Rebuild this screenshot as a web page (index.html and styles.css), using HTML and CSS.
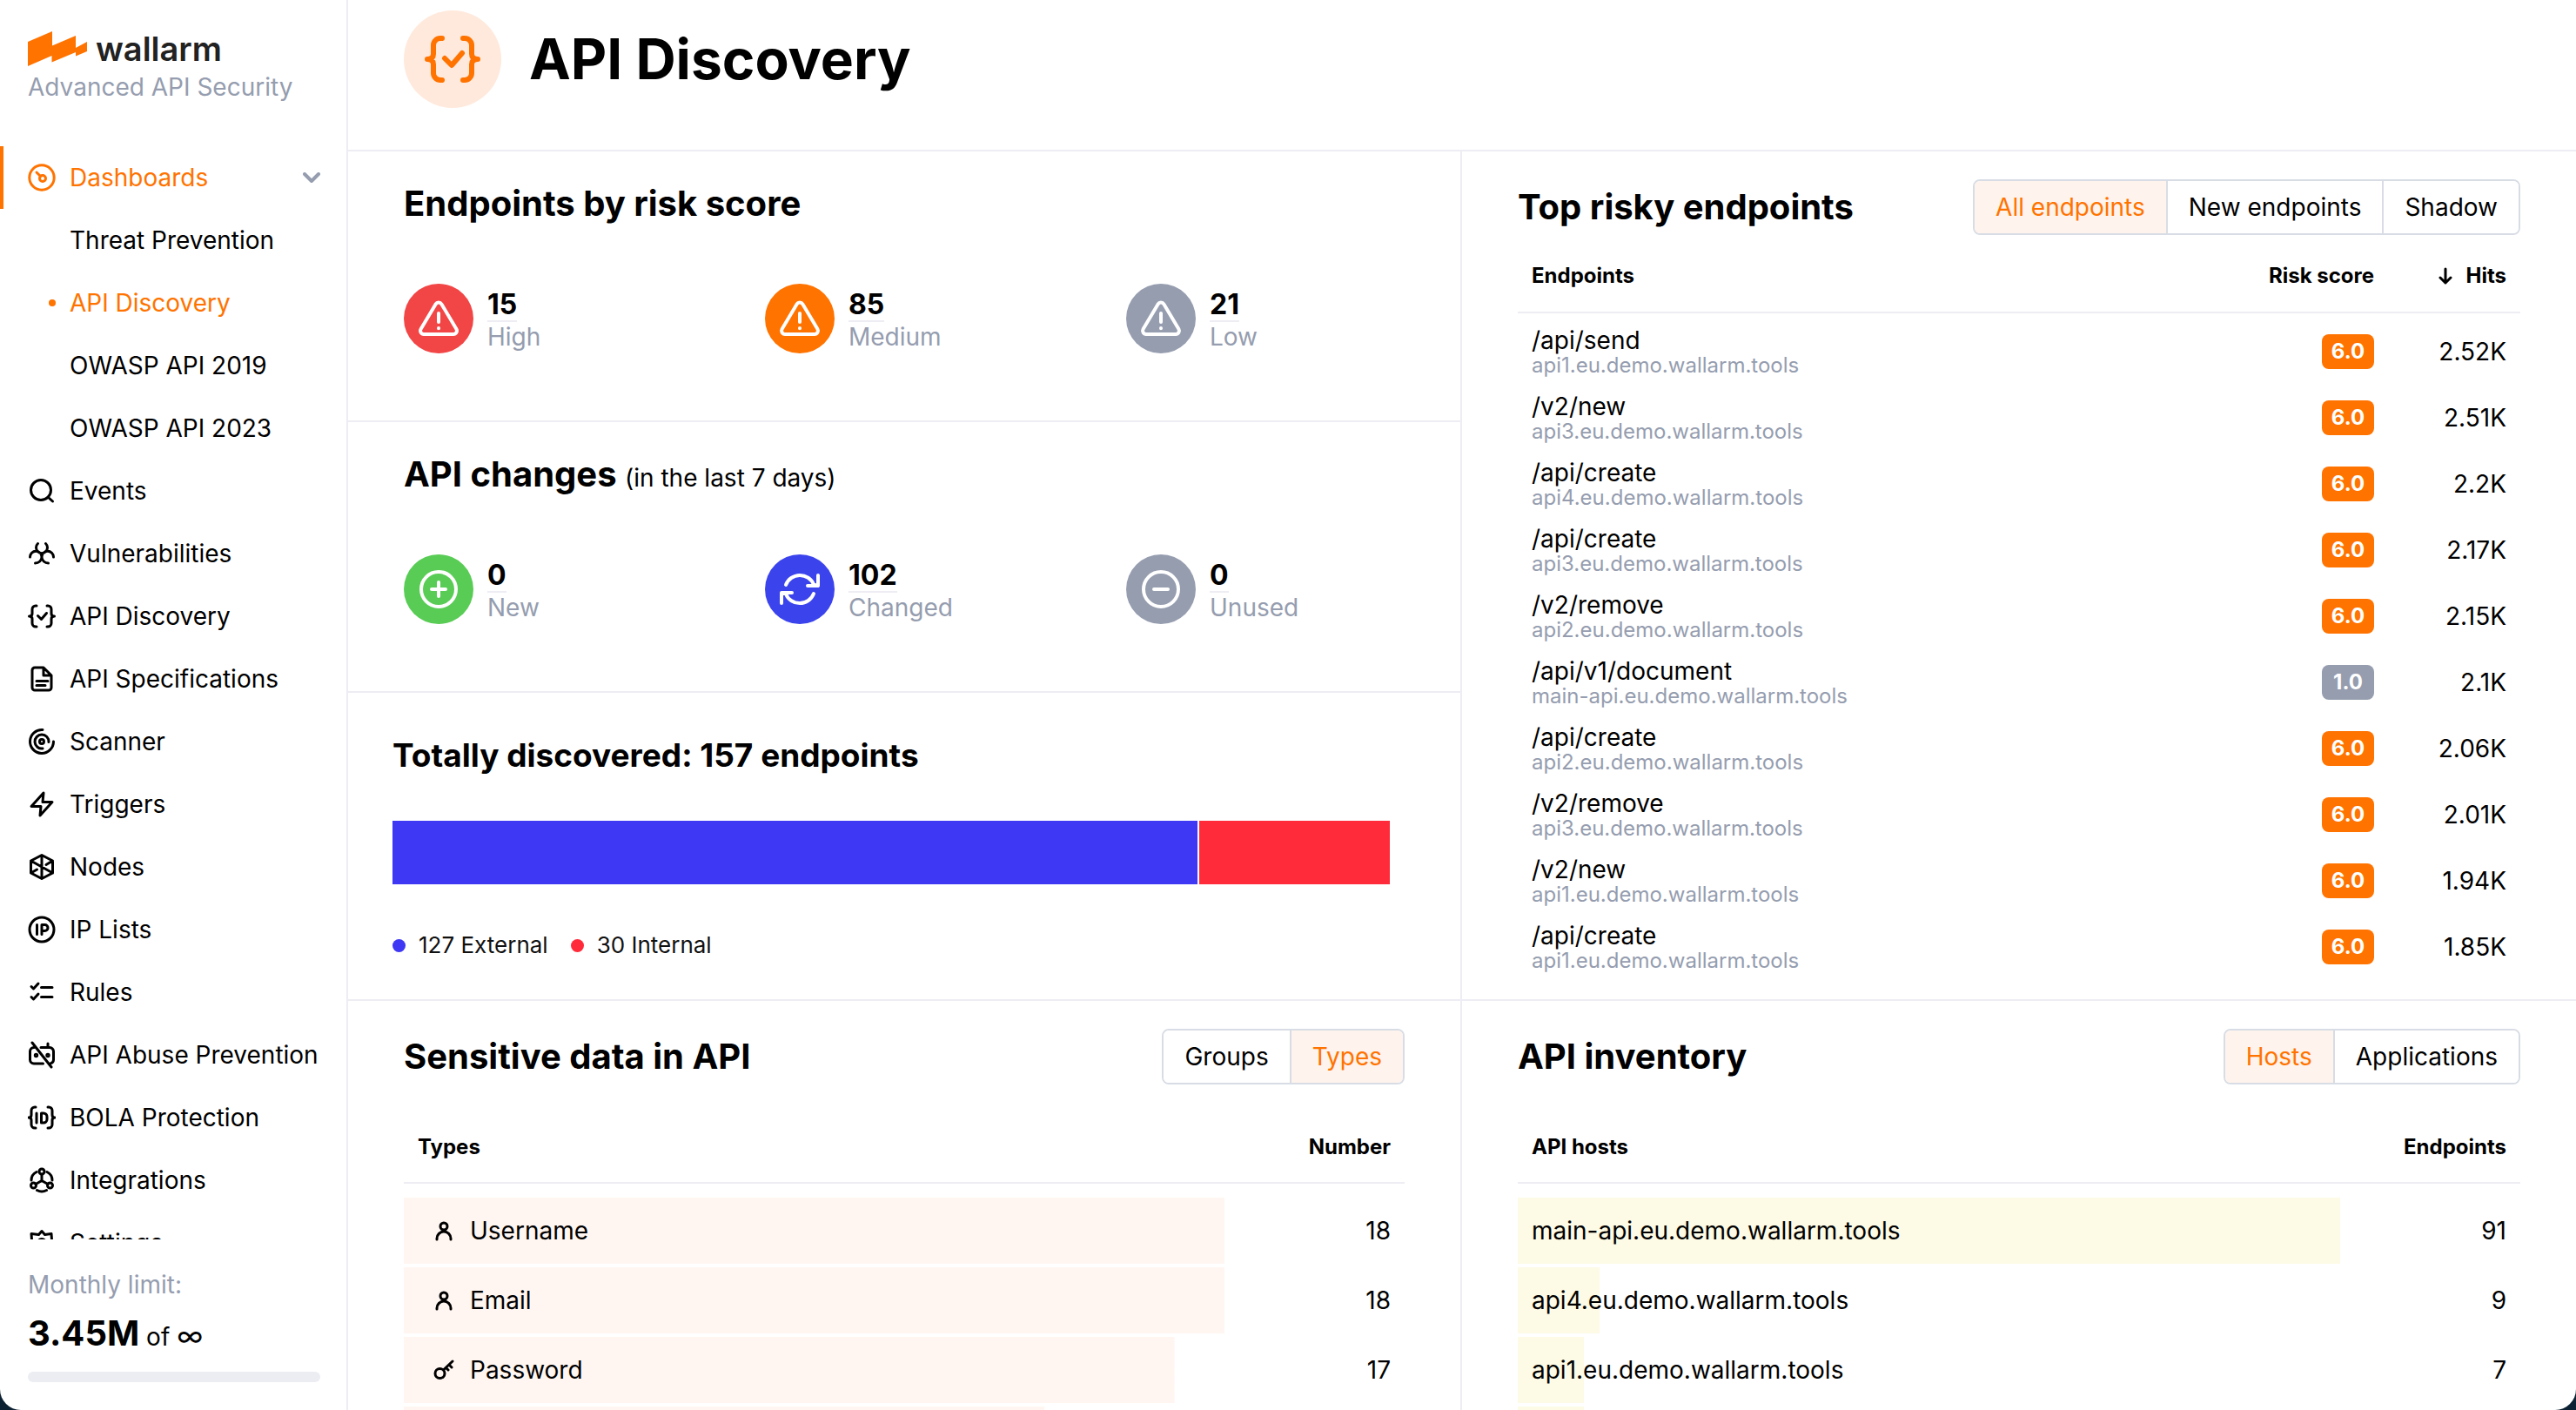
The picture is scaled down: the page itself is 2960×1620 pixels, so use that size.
FILE: index.html
```html
<!DOCTYPE html>
<html lang="en">
<head>
<meta charset="utf-8">
<title>API Discovery – Wallarm</title>
<link rel="stylesheet" href="styles.css">
</head>
<body>
<svg class="sprite" aria-hidden="true">
  <symbol id="i-braces" viewBox="0 0 32 32"><path d="M10 4H9a4 4 0 0 0-4 4v5q0 3-3.500 3q3.500 0 3.500 3v5a4 4 0 0 0 4 4h1M22 4h1a4 4 0 0 1 4 4v5q0 3 3.500 3q-3.500 0-3.500 3v5a4 4 0 0 1-4 4h-1M11.500 15.500l4 4 6-7"/></symbol>
  <symbol id="i-warn" viewBox="0 0 24 24"><path d="M10.300 3.700 1.800 18a2 2 0 0 0 1.700 3h17a2 2 0 0 0 1.700-3L13.700 3.700a2 2 0 0 0-3.400 0zM12 9v5M12 17.500v.1"/></symbol>
  <symbol id="i-user" viewBox="0 0 24 24"><circle cx="12" cy="7" r="4"/><path d="M4 22v-1a8 8 0 0 1 16 0v1"/></symbol>
</svg>
<div class="app">
  <aside class="sidebar">
    <a class="brand" href="#">
      <svg class="brand-mark" viewBox="0 0 68 40"><path d="M0 12 28 0v16.500L55 5v14l13-7v11l-13 5.500V24L27.500 35.500V28L0 40z" fill="#ff7300"/></svg>
      <span class="brand-name">wallarm</span>
    </a>
    <p class="tagline">Advanced API Security</p>
    <nav class="nav">
      <a class="nav-item current" href="#"><svg class="icon" viewBox="0 0 32 32"><circle cx="16" cy="16" r="14.200"/><circle cx="17" cy="17" r="3.500"/><path d="m10 10 4.500 4.500"/></svg>Dashboards<svg class="chevron" viewBox="0 0 20 12"><path d="m2 2 8 8 8-8"/></svg></a>
      <a class="nav-item sub" href="#">Threat Prevention</a>
      <a class="nav-item sub selected" href="#">API Discovery</a>
      <a class="nav-item sub" href="#">OWASP API 2019</a>
      <a class="nav-item sub" href="#">OWASP API 2023</a>
      <a class="nav-item" href="#"><svg class="icon" viewBox="0 0 32 32"><circle cx="15" cy="15" r="11.500"/><path d="m23.500 23.500 5 4.500"/></svg>Events</a>
      <a class="nav-item" href="#"><svg class="icon" viewBox="0 0 32 32"><path d="M11.500 4.500a6.500 6.500 0 1 0 9 0M2.500 20a6.500 6.500 0 0 1 13.500 0c0 4-3.500 7-7.500 7M29.500 20a6.500 6.500 0 0 0-13.500 0c0 4 3.500 7 7.500 7"/></svg>Vulnerabilities</a>
      <a class="nav-item" href="#"><svg class="icon"><use href="#i-braces"/></svg>API Discovery</a>
      <a class="nav-item" href="#"><svg class="icon" viewBox="0 0 32 32"><path d="M18 3H8a3 3 0 0 0-3 3v20a3 3 0 0 0 3 3h16a3 3 0 0 0 3-3V12zM18 3v9h9M10 18.500h13M10 23.500h10"/></svg>API Specifications</a>
      <a class="nav-item" href="#"><svg class="icon" viewBox="0 0 32 32"><path d="M17 2.500A13.500 13.500 0 1 0 29.500 16M17 24a8 8 0 1 1 7-7.500"/><circle cx="16" cy="16" r="2.500"/></svg>Scanner</a>
      <a class="nav-item" href="#"><svg class="icon" viewBox="0 0 32 32"><path d="M18 3 4 18.500h11L14 29l14-15.500H17z"/></svg>Triggers</a>
      <a class="nav-item" href="#"><svg class="icon" viewBox="0 0 32 32"><path d="M16 2.500 28.500 9v14L16 29.500 3.500 23V9zM16 2.500v27M3.500 9l25 14M28.500 9 21 13.500M3.500 23l7-4"/></svg>Nodes</a>
      <a class="nav-item" href="#"><svg class="icon" viewBox="0 0 32 32"><circle cx="16" cy="16" r="14"/><path d="M10.500 10.500v11M16 21.500v-11h3.500a3.500 3.500 0 0 1 0 7H16"/></svg>IP Lists</a>
      <a class="nav-item" href="#"><svg class="icon" viewBox="0 0 32 32"><path d="m4 9.500 2.500 2.500L12 6M4 21.500 6.500 24l5.500-6M15.500 10.500H28M15.500 21.500H28"/></svg>Rules</a>
      <a class="nav-item" href="#"><svg class="icon" viewBox="0 0 32 32"><path d="m5 2 22 28M7 7.500a4.500 4.500 0 0 0-4.500 4.500v9.500A4.500 4.500 0 0 0 7 26h10.500M15 7.500h10a4.500 4.500 0 0 1 4.500 4.500v9.500a4.500 4.500 0 0 1-3 4.200M23 3v4.500"/><circle cx="9.500" cy="16.500" r="1.200"/><circle cx="23" cy="16.500" r="1.200"/></svg>API Abuse Prevention</a>
      <a class="nav-item" href="#"><svg class="icon" viewBox="0 0 32 32"><path d="M9 4H8a4 4 0 0 0-4 4v5q0 3-3 3q3 0 3 3v5a4 4 0 0 0 4 4h1M23 4h1a4 4 0 0 1 4 4v5q0 3 3 3q-3 0-3 3v5a4 4 0 0 1-4 4h-1M10 11v11M15.500 11v11h2.500a4 4 0 0 0 4-4v-3a4 4 0 0 0-4-4z"/></svg>BOLA Protection</a>
      <a class="nav-item" href="#"><svg class="icon" viewBox="0 0 32 32"><circle cx="16" cy="6" r="3"/><circle cx="6.500" cy="22" r="3"/><circle cx="25.500" cy="22" r="3"/><path d="M16 9v8M16 16.500 9 20.500M16 16.500l7 4M10 6.500c-4 2-6 6-6 9.500M22 6.500c4 2 6 6 6 9.500M10.500 27.500c3.500 2 7.500 2 11 0"/></svg>Integrations</a>
      <a class="nav-item" href="#"><svg class="icon" viewBox="0 0 32 32"><path d="m16 2.500 3.500 4 7.500-1 .5 7 2.500 3.500-2.500 4-.5 7-7.500-1-3.500 4-3.500-4-7.500 1-.5-7L2 16l2.500-3.500-.5-7 8.500 1z"/><circle cx="16" cy="16" r="4.500"/></svg>Settings</a>
    </nav>
    <div class="limit">
      <p class="limit-label">Monthly limit:</p>
      <p class="limit-value"><strong>3.45M</strong> of <span class="infinity">∞</span></p>
      <div class="limit-track"></div>
    </div>
  </aside>

  <main class="main">
    <header class="page-head">
      <span class="page-icon"><svg viewBox="0 0 32 32"><use href="#i-braces"/></svg></span>
      <h1>API Discovery</h1>
    </header>
    <div class="columns">
      <div class="column column-left">
        <section class="panel stats-panel">
          <h2>Endpoints by risk score</h2>
          <div class="stats">
            <div class="stat"><span class="disc red"><svg viewBox="0 0 24 24"><use href="#i-warn"/></svg></span><div class="stat-text"><a class="num" href="#">15</a><p>High</p></div></div>
            <div class="stat"><span class="disc orange"><svg viewBox="0 0 24 24"><use href="#i-warn"/></svg></span><div class="stat-text"><a class="num" href="#">85</a><p>Medium</p></div></div>
            <div class="stat"><span class="disc grey"><svg viewBox="0 0 24 24"><use href="#i-warn"/></svg></span><div class="stat-text"><a class="num" href="#">21</a><p>Low</p></div></div>
          </div>
        </section>
        <section class="panel stats-panel">
          <h2>API changes <small>(in the last 7 days)</small></h2>
          <div class="stats">
            <div class="stat"><span class="disc green"><svg viewBox="0 0 24 24"><circle cx="12" cy="12" r="10"/><path d="M12 8v8M8 12h8"/></svg></span><div class="stat-text"><a class="num" href="#">0</a><p>New</p></div></div>
            <div class="stat"><span class="disc blue"><svg viewBox="0 0 24 24"><path d="M4 9.500a8.600 8.600 0 0 1 16-.2L22.500 10M22.500 4v6h-6M20 14.500a8.600 8.600 0 0 1-16 .2L1.500 14M1.500 20v-6h6"/></svg></span><div class="stat-text"><a class="num" href="#">102</a><p>Changed</p></div></div>
            <div class="stat"><span class="disc grey"><svg viewBox="0 0 24 24"><circle cx="12" cy="12" r="10"/><path d="M8 12h8"/></svg></span><div class="stat-text"><a class="num" href="#">0</a><p>Unused</p></div></div>
          </div>
        </section>
        <section class="panel total-panel">
          <h2>Totally discovered: 157 endpoints</h2>
          <div class="split"><span class="ext" style="flex-grow:127"></span><span class="int" style="flex-grow:30"></span></div>
          <ul class="legend"><li class="ext-key">127 External</li><li class="int-key">30 Internal</li></ul>
        </section>
      </div>
      <section class="column panel risky-panel">
        <div class="panel-head">
          <h2>Top risky endpoints</h2>
          <div class="tabs"><button class="on">All endpoints</button><button>New endpoints</button><button>Shadow</button></div>
        </div>
        <table class="risky">
          <thead><tr><th>Endpoints</th><th class="score">Risk score</th><th class="hits"><svg class="sort" viewBox="0 0 16 20"><path d="M8 2v16M2 12l6 6 6-6"/></svg>Hits</th></tr></thead>
          <tbody>
            <tr><td>/api/send<small>api1.eu.demo.wallarm.tools</small></td><td class="score"><b>6.0</b></td><td class="hits">2.52K</td></tr>
            <tr><td>/v2/new<small>api3.eu.demo.wallarm.tools</small></td><td class="score"><b>6.0</b></td><td class="hits">2.51K</td></tr>
            <tr><td>/api/create<small>api4.eu.demo.wallarm.tools</small></td><td class="score"><b>6.0</b></td><td class="hits">2.2K</td></tr>
            <tr><td>/api/create<small>api3.eu.demo.wallarm.tools</small></td><td class="score"><b>6.0</b></td><td class="hits">2.17K</td></tr>
            <tr><td>/v2/remove<small>api2.eu.demo.wallarm.tools</small></td><td class="score"><b>6.0</b></td><td class="hits">2.15K</td></tr>
            <tr><td>/api/v1/document<small>main-api.eu.demo.wallarm.tools</small></td><td class="score"><b class="low">1.0</b></td><td class="hits">2.1K</td></tr>
            <tr><td>/api/create<small>api2.eu.demo.wallarm.tools</small></td><td class="score"><b>6.0</b></td><td class="hits">2.06K</td></tr>
            <tr><td>/v2/remove<small>api3.eu.demo.wallarm.tools</small></td><td class="score"><b>6.0</b></td><td class="hits">2.01K</td></tr>
            <tr><td>/v2/new<small>api1.eu.demo.wallarm.tools</small></td><td class="score"><b>6.0</b></td><td class="hits">1.94K</td></tr>
            <tr><td>/api/create<small>api1.eu.demo.wallarm.tools</small></td><td class="score"><b>6.0</b></td><td class="hits">1.85K</td></tr>
          </tbody>
        </table>
      </section>
    </div>
    <div class="columns bottom">
      <section class="column column-left panel">
        <div class="panel-head">
          <h2>Sensitive data in API</h2>
          <div class="tabs"><button>Groups</button><button class="on">Types</button></div>
        </div>
        <table class="bars peach">
          <thead><tr><th>Types</th><th class="count">Number</th></tr></thead>
          <tbody>
            <tr style="--share:82%"><td><svg class="type-icon" viewBox="0 0 24 24"><use href="#i-user"/></svg>Username</td><td class="count">18</td></tr>
            <tr style="--share:82%"><td><svg class="type-icon" viewBox="0 0 24 24"><use href="#i-user"/></svg>Email</td><td class="count">18</td></tr>
            <tr style="--share:77%"><td><svg class="type-icon" viewBox="0 0 24 24"><circle cx="7.500" cy="16" r="5.500"/><path d="M11.500 12 22 2M18 6l3 3M14.500 9.500 17 12"/></svg>Password</td><td class="count">17</td></tr>
            <tr style="--share:64%"><td></td><td class="count"></td></tr>
          </tbody>
        </table>
      </section>
      <section class="column panel">
        <div class="panel-head">
          <h2>API inventory</h2>
          <div class="tabs"><button class="on">Hosts</button><button>Applications</button></div>
        </div>
        <table class="bars lemon">
          <thead><tr><th>API hosts</th><th class="count">Endpoints</th></tr></thead>
          <tbody>
            <tr style="--share:82%"><td>main-api.eu.demo.wallarm.tools</td><td class="count">91</td></tr>
            <tr style="--share:8.2%"><td>api4.eu.demo.wallarm.tools</td><td class="count">9</td></tr>
            <tr style="--share:6.6%"><td>api1.eu.demo.wallarm.tools</td><td class="count">7</td></tr>
            <tr style="--share:6.6%"><td></td><td class="count"></td></tr>
          </tbody>
        </table>
      </section>
    </div>
  </main>
</div>
</body>
</html>
```
FILE: styles.css
```css
:root {
  --orange: #ff7300;
  --line: #ededf3;
  --muted: #959daf;
}
* { box-sizing: border-box; }
html { background: #0c2233; }
body { margin: 0; font: 400 28px/36px Inter, sans-serif; color: #000; }
h1, h2, p, ul { margin: 0; padding: 0; font-weight: 700; }
p { font-weight: 400; }
a { color: inherit; text-decoration: none; }
svg { fill: none; stroke: currentColor; stroke-linecap: round; stroke-linejoin: round; flex: none; }
.sprite { display: none; }

.app { display: flex; height: 100vh; overflow: hidden; background: #fff; border-radius: 0 0 24px 24px; }

/* Sidebar */
.sidebar { display: flex; flex-direction: column; flex: none; width: 400px; padding-top: 32px; border-right: 2px solid var(--line); }
.brand { display: flex; align-items: center; gap: 10px; height: 48px; padding-left: 32px; }
.brand-mark { width: 68px; height: 40px; stroke: none; }
.brand-name { font-size: 38px; font-weight: 600; line-height: 40px; color: #222; }
.tagline { padding-left: 32px; line-height: 40px; color: var(--muted); }
.nav { flex: 1; min-height: 0; margin-top: 48px; overflow: hidden; }
.nav-item { display: flex; align-items: center; gap: 16px; height: 72px; padding: 0 30px 0 32px; white-space: nowrap; }
.icon { width: 32px; height: 32px; stroke-width: 3; }
.current { padding-left: 28px; border-left: 4px solid var(--orange); color: var(--orange); }
.chevron { width: 20px; height: 12px; margin-left: auto; color: var(--muted); stroke-width: 4; }
.sub { padding-left: 80px; }
.selected { padding-left: 56px; color: var(--orange); }
.selected::before { content: ""; width: 8px; height: 8px; border-radius: 50%; background: var(--orange); }
.limit { padding: 32px 30px 32px 32px; }
.limit-label { line-height: 40px; color: var(--muted); }
.limit-value { margin-top: 12px; line-height: 56px; }
.limit-value strong { font-size: 40px; line-height: 40px; }
.infinity { font-size: 32px; line-height: 32px; }
.limit-track { height: 12px; margin-top: 12px; border-radius: 6px; background: #ecedf2; }

/* Page */
.main { display: flex; flex-direction: column; flex: 1; min-width: 0; }
.page-head { display: flex; align-items: center; gap: 32px; padding: 12px 64px 48px; border-bottom: 2px solid var(--line); }
.page-icon { display: grid; place-items: center; width: 112px; height: 112px; border-radius: 50%; background: #ffe9dc; color: var(--orange); }
.page-icon svg { width: 64px; height: 64px; stroke-width: 3; }
h1 { font-size: 64px; line-height: 80px; }
h2 { font-size: 40px; line-height: 48px; }
h2 small { font-size: 28px; font-weight: 400; line-height: 28px; }

.columns { display: grid; grid-template-columns: 1fr 1fr; border-bottom: 2px solid var(--line); }
.column-left { border-right: 2px solid var(--line); }
.panel { padding: 32px 64px 22px; }
.bottom { flex: 1; border-bottom: 0; }
.panel-head { display: flex; align-items: center; justify-content: space-between; height: 64px; }

.stats-panel { padding: 36px 64px 77px; border-bottom: 2px solid var(--line); }
.stats { display: grid; grid-template-columns: repeat(3, 1fr); gap: 95px; margin-top: 68px; }
.stat { display: flex; align-items: center; gap: 16px; }
.stat-text { padding-top: 4px; }
.stat p { line-height: 34px; color: var(--muted); }
.disc { display: grid; place-items: center; width: 80px; height: 80px; border-radius: 50%; color: #fff; }
.disc svg { width: 48px; height: 48px; stroke-width: 2; }
.red { background: #f24545; }
.orange { background: var(--orange); }
.grey { background: var(--muted); }
.green { background: #59cc55; }
.blue { background: #3b43ec; }
.num { display: block; width: max-content; border-bottom: 2px solid var(--line); font-size: 32px; font-weight: 700; line-height: 36px; }

.total-panel { padding: 48px 81px 40px 51px; }
.total-panel h2 { font-size: 37px; }
.split { display: flex; gap: 2px; height: 73px; margin-top: 51px; }
.ext { background: #3e37f3; }
.int { background: #ff2b3a; }
.legend { display: flex; gap: 26px; margin-top: 52px; font-size: 26px; font-weight: 400; list-style: none; color: #111; }
.legend li { display: flex; align-items: center; gap: 15px; }
.legend li::before { content: ""; width: 15px; height: 15px; border-radius: 50%; background: #3e37f3; }
.legend .int-key::before { background: #ff2b3a; }

.tabs { display: flex; overflow: hidden; border: 2px solid #d8dde5; border-radius: 8px; }
.tabs button { height: 60px; padding: 0 24px; border: 0; background: #fff; font: inherit; color: #000; }
.tabs button + button { border-left: 2px solid #d8dde5; }
.tabs .on { background: #fff3ed; color: var(--orange); }

/* Tables */
table { width: 100%; border-collapse: separate; }
th { padding: 0 16px; border-bottom: 2px solid var(--line); font-size: 24px; font-weight: 700; text-align: left; }
td { padding: 0 16px; }
.score, .hits, .count { text-align: right; }
.risky { border-spacing: 0; }
.risky th { height: 90px; padding-top: 6px; }
.risky tbody::before { content: ""; display: block; height: 6px; }
.risky td { height: 76px; line-height: 32px; }
.risky small { display: block; font-size: 24px; line-height: 26px; color: var(--muted); }
.risky .hits { width: 152px; padding-left: 0; }
.risky b { display: inline-block; width: 60px; border-radius: 8px; background: var(--orange); color: #fff; font-size: 24px; line-height: 40px; text-align: center; }
.risky b.low { background: var(--muted); }
.sort { width: 16px; height: 20px; margin-right: 16px; stroke-width: 3; vertical-align: -2px; }
.bars { margin-top: 32px; border-spacing: 0; }
.bars th { height: 82px; }
.bars tbody::before { content: ""; display: block; height: 16px; }
.bars td { height: 80px; padding-bottom: 4px; }
.bars tbody tr { background: linear-gradient(var(--bar), var(--bar)) no-repeat 0 0 / var(--share) 76px; }
.peach { --bar: #fff6f1; }
.lemon { --bar: #fdfae5; }
.type-icon { width: 24px; height: 24px; margin: 0 18px; stroke-width: 3; vertical-align: -2px; }
```
